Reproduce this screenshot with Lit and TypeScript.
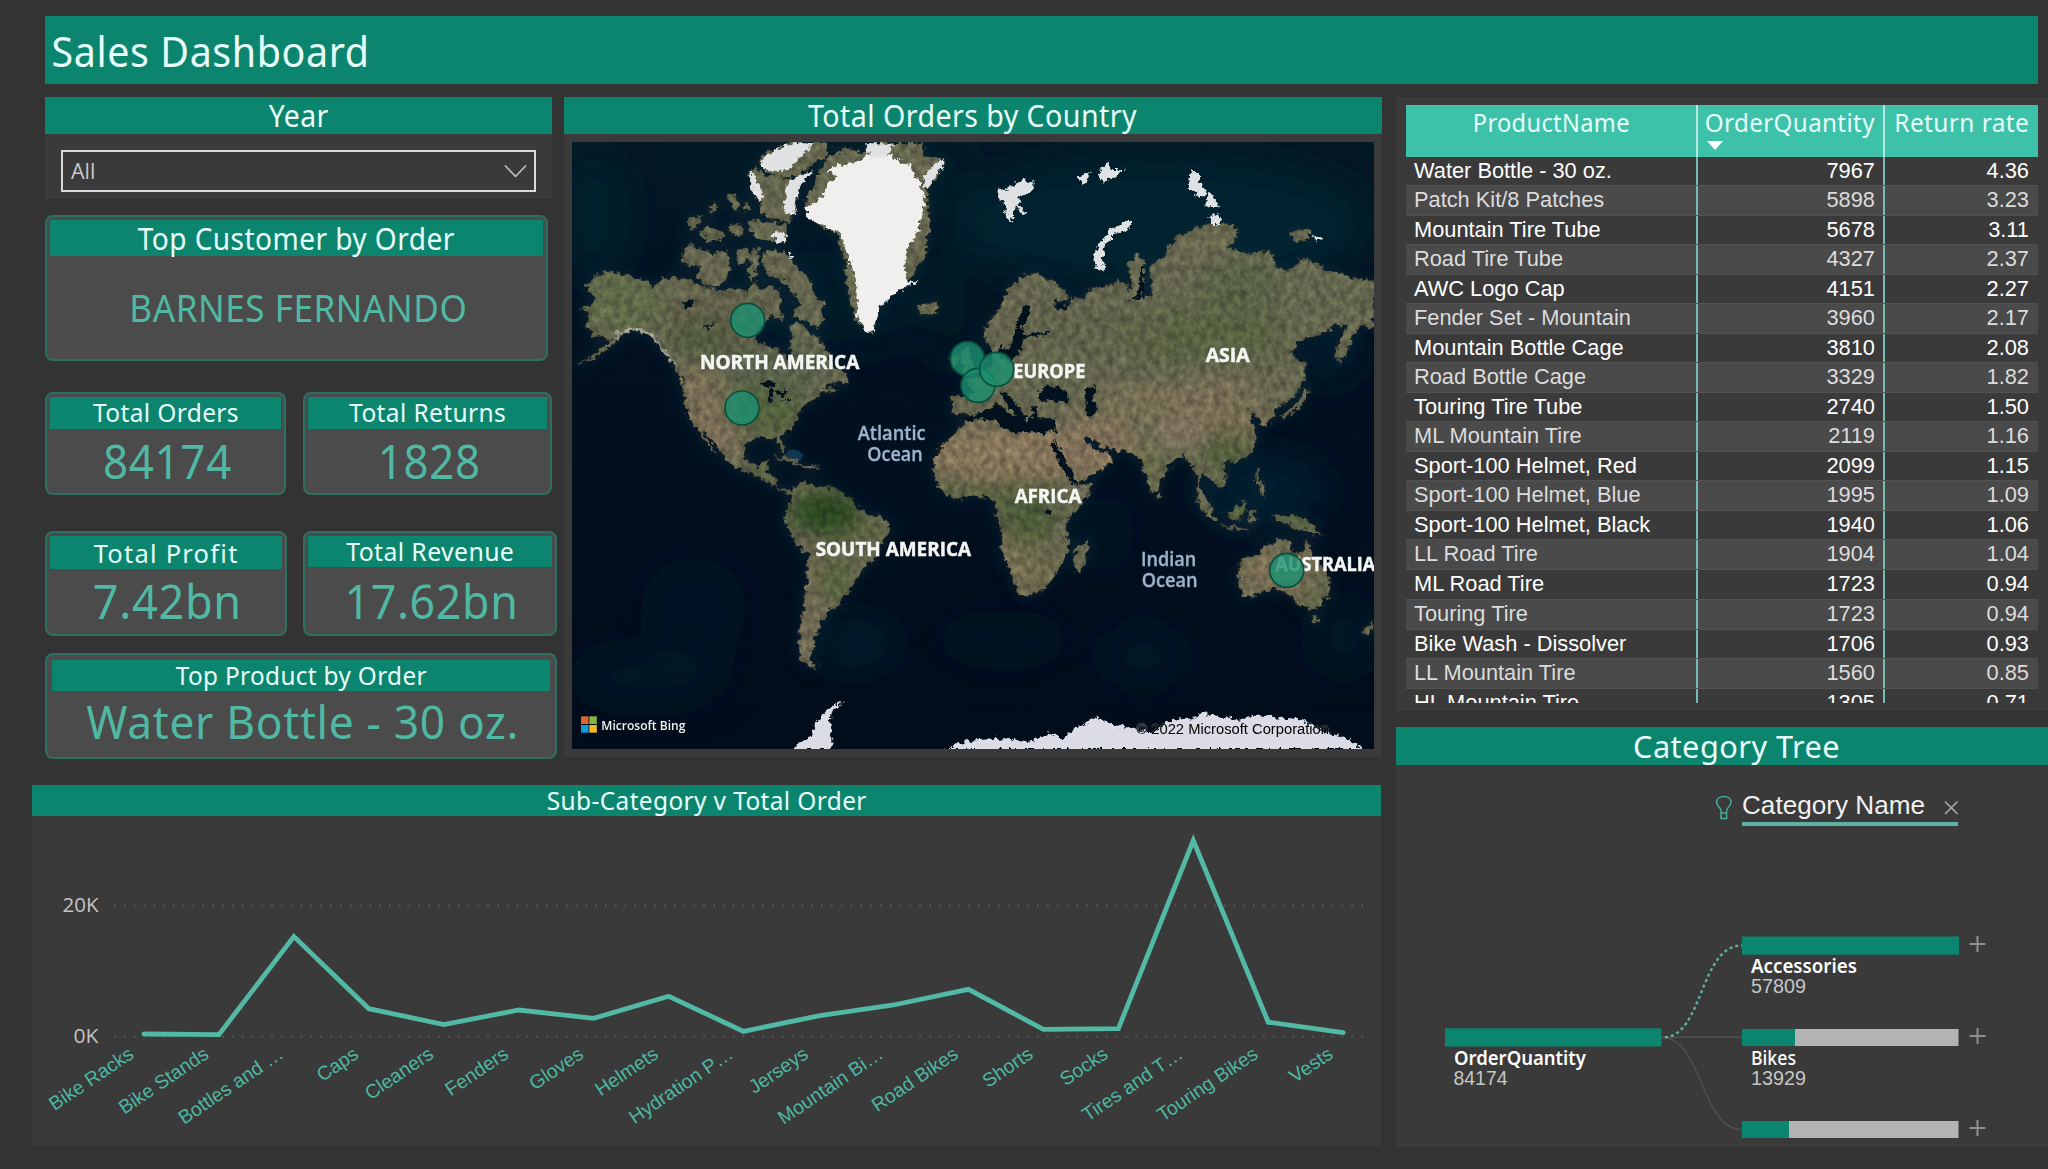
import { LitElement, html, svg, css } from "lit";
import { customElement, property } from "lit/decorators.js";

const HEAD_FONT = css`"Noto Sans", "Open Sans", sans-serif`;
const BODY_FONT = css`"Liberation Sans", Arial, sans-serif`;

/**
 * One line of text that takes up exactly `w` pixels: short lines are tracked
 * out, long lines are condensed.
 */
@customElement("fit-line")
class FitLine extends LitElement {
  @property({ type: Number }) w = 0;
  static styles = css`
    :host { display: inline-flex; justify-content: center; white-space: pre; vertical-align: top; }
    .ink { display: block; flex: none; letter-spacing: 0.015em; }
  `;
  firstUpdated() {
    const ink = this.renderRoot.querySelector<HTMLElement>(".ink")!;
    const count = (this.textContent ?? "").length;
    const natural = ink.getBoundingClientRect().width;
    this.style.width = `${this.w}px`;
    if (natural > this.w) {
      ink.style.transform = `scaleX(${(this.w / natural).toFixed(4)})`;
    } else {
      const size = parseFloat(getComputedStyle(ink).fontSize);
      const spacing = size * 0.015 + (this.w - natural) / count;
      ink.style.letterSpacing = `${spacing.toFixed(3)}px`;
    }
  }
  render() {
    return html`<span class="ink"><slot></slot></span>`;
  }
}

/* ---------------------------------------------------------------- map */

const NORTH_AMERICA =
  "M75 590L100 560L140 540L170 552L200 550L235 568L270 575L285 590L310 565L350 558L390 570L430 588L480 602L520 592L560 602L582 572L600 600L625 585L645 592L662 612L668 640L650 665L672 678L665 695L630 680L612 700L590 730L585 752L622 768L660 780L680 812L698 800L690 760L694 705L712 696L735 708L752 735L775 742L800 775L806 800L830 835L865 850L858 885L832 872L800 885L790 892L835 895L820 905L782 912L760 930L730 950L712 975L708 1000L675 1030L662 1045L680 1075L676 1092L660 1080L650 1048L600 1042L562 1056L552 1095L570 1122L598 1130L612 1108L630 1108L620 1146L650 1162L652 1190L690 1200L700 1205L690 1215L652 1195L620 1172L590 1158L540 1140L502 1118L478 1078L450 1040L425 1020L470 1092L458 1085L420 1030L390 988L370 920L365 870L335 820L300 770L275 738L245 728L215 722L185 735L160 765L120 795L60 820L40 826L110 785L150 752L130 740L100 742L75 700L92 672L62 655L100 640L105 620Z";
const SOUTH_AMERICA =
  "M690 1205L715 1182L740 1175L765 1188L800 1188L838 1202L870 1222L895 1255L930 1275L965 1280L993 1300L985 1335L960 1365L950 1405L915 1432L900 1455L880 1478L865 1508L840 1525L838 1545L815 1558L800 1568L798 1588L775 1600L778 1625L760 1645L768 1662L755 1685L750 1710L775 1725L760 1735L732 1720L718 1695L716 1640L724 1580L732 1530L740 1470L745 1395L712 1368L690 1330L670 1290L678 1258L692 1235Z";
const EURASIA =
  "M1275 720L1282 698L1320 655L1338 605L1378 562L1430 545L1475 575L1515 598L1525 622L1500 640L1480 650L1515 655L1535 620L1560 625L1590 598L1640 588L1665 570L1700 580L1710 610L1708 560L1705 520L1728 490L1752 505L1756 580L1745 625L1775 615L1770 555L1770 525L1810 505L1820 480L1848 442L1900 418L1940 402L2010 400L2032 415L2030 445L2000 475L2080 490L2100 480L2135 488L2148 530L2180 540L2212 525L2220 505L2280 520L2290 545L2340 545L2370 562L2442 572L2442 720L2405 705L2380 735L2362 790L2340 822L2325 795L2340 745L2362 705L2330 708L2270 738L2220 752L2190 790L2228 815L2230 870L2205 925L2150 955L2130 1000L2105 1010L2090 975L2070 960L2078 1000L2092 1035L2080 1075L2060 1100L2025 1118L1990 1115L2002 1160L1995 1180L1975 1198L1955 1170L1930 1150L1920 1190L1950 1238L1968 1290L1935 1260L1912 1220L1910 1170L1895 1125L1870 1100L1845 1108L1818 1145L1795 1190L1785 1215L1768 1195L1742 1115L1710 1085L1650 1078L1620 1068L1590 1045L1572 1035L1585 1065L1612 1082L1650 1088L1652 1115L1620 1145L1580 1165L1545 1185L1598 1180L1590 1210L1555 1255L1515 1300L1530 1365L1510 1415L1475 1465L1445 1505L1400 1520L1378 1515L1350 1445L1322 1380L1328 1325L1305 1280L1308 1240L1280 1220L1230 1220L1180 1228L1140 1195L1120 1150L1125 1100L1150 1060L1185 1030L1205 1000L1240 975L1175 972L1172 920L1225 918L1240 905L1215 870L1260 855L1280 835L1300 820L1288 785L1300 770L1275 755Z";
const INLAND_WATER = [
  "M1205 985L1240 978L1262 965L1300 950L1312 935L1340 965L1370 985L1340 940L1320 905L1345 915L1395 970L1400 1000L1420 968L1412 950L1430 948L1440 985L1485 985L1488 1025L1435 1030L1395 1022L1370 1032L1320 1010L1315 992L1260 985L1215 995Z",
  "M1475 1050L1490 1060L1545 1165L1548 1188L1530 1172L1500 1125L1478 1075Z",
  "M1435 910L1460 885L1480 895L1500 888L1528 925L1520 938L1470 930L1440 932Z",
  "M1570 900L1605 885L1610 905L1595 925L1612 960L1600 980L1575 975L1580 940Z",
  "M1372 690L1395 645L1412 650L1400 690L1385 715L1395 732L1465 725L1460 735L1400 742L1375 790L1345 815L1310 790L1322 770L1350 780L1362 740Z",
  "M1485 620L1495 640L1520 650L1512 665L1488 650Z",
  "M1458 1262L1472 1260L1474 1272L1462 1276Z",
  "M1745 525L1752 530L1750 600L1735 628L1700 632L1732 615Z",
  "M600 885L630 870L650 890L625 892Z",
  "M622 935L632 895L640 900L634 935Z",
  "M648 900L680 905L665 925Z",
  "M660 935L690 925L690 932Z",
  "M370 640L400 628L392 650L375 655Z",
  "M425 715L470 695L440 718Z",
];
const AUSTRALIA =
  "M2035 1420L2065 1400L2098 1390L2110 1368L2140 1360L2150 1345L2190 1352L2186 1375L2215 1395L2232 1378L2236 1338L2252 1368L2262 1402L2290 1430L2312 1468L2308 1505L2285 1548L2255 1556L2215 1545L2200 1520L2180 1510L2150 1498L2110 1502L2080 1518L2045 1522L2035 1480Z";
const SMALL_LANDS = [
  "M1540 1395L1555 1370L1582 1345L1588 1370L1575 1410L1560 1448L1545 1442Z",
  "M2255 1580L2280 1582L2272 1602L2260 1598Z",
  "M2405 1630L2415 1612L2442 1590L2442 1612L2420 1635Z",
  "M2140 1268L2170 1280L2200 1272L2240 1290L2270 1320L2300 1345L2260 1330L2230 1320L2200 1318L2180 1300L2150 1290Z",
  "M1998 1272L2020 1260L2050 1228L2062 1240L2050 1280L2030 1290L2010 1286Z",
  "M1905 1222L1930 1240L1965 1275L1972 1295L1955 1290L1925 1260Z",
  "M1970 1298L2010 1305L2070 1318L2068 1325L2000 1316Z",
  "M2065 1262L2100 1252L2080 1270L2095 1300L2080 1290L2072 1310L2066 1290Z",
  "M2085 1130L2098 1135L2095 1165L2115 1190L2110 1225L2098 1200L2085 1165Z",
  "M2230 890L2250 895L2240 925L2222 950L2190 975L2150 985L2180 960L2215 935Z",
  "M2228 805L2236 812L2234 880L2226 880Z",
  "M1170 800L1195 795L1192 825L1175 835Z",
  "M1200 780L1225 770L1235 810L1250 840L1210 850Z",
  "M640 1098L680 1100L720 1120L760 1128L790 1132L740 1138L700 1118L660 1108Z",
  "M1790 1205L1804 1215L1800 1230L1792 1225Z",
  "M375 470L400 462L425 480L460 485L500 480L510 510L505 560L470 595L430 585L408 560L420 530L390 530L360 520Z",
  "M525 480L560 470L575 500L550 530L525 510Z",
  "M575 470L600 475L600 500L585 560L570 580L565 540Z",
  "M612 485L650 478L680 490L700 520L735 550L755 580L760 610L795 640L785 665L795 690L770 715L735 690L695 680L720 640L690 600L665 570L620 550L606 520Z",
  "M625 650L650 640L668 670L645 680Z",
  "M380 395L400 375L425 380L420 405L392 420Z",
  "M412 425L440 410L495 425L485 450L440 455Z",
  "M500 410L530 395L555 415L545 440L510 430Z",
  "M560 395L600 390L680 405L675 460L620 455L590 440L565 420Z",
  "M445 350L465 335L470 355L450 372Z",
  "M500 318L520 310L540 345L535 365L510 345Z",
  "M550 340L570 335L572 360L552 362Z",
  "M565 250L590 230L620 260L680 260L700 300L715 330L690 400L640 390L600 370L600 330L575 300Z",
  "M595 210L630 180L690 160L805 160L800 200L740 235L720 260L650 265L610 240Z",
  "M805 200L850 175L910 185L960 160L1090 160L1100 200L1150 212L1130 260L1100 290L1110 400L1095 500L1050 570L960 640L935 732L885 690L862 600L850 500L830 430L770 400L730 340L770 260Z",
  "M1070 640L1100 645L1130 630L1140 655L1110 680L1080 672Z",
  "M2185 430L2210 415L2250 420L2245 450L2200 455Z",
];
const GREENLAND_ICE =
  "M925 195L960 175L1000 205L1045 225L1075 270L1092 320L1090 370L1082 400L1065 440L1042 480L1030 530L1042 575L1075 572L1010 605L985 630L955 655L940 725L915 725L892 680L888 570L866 500L838 425L790 412L745 385L728 350L775 335L800 290L830 262L800 235L880 220Z";
const SNOW = [
  "M600 215L640 180L700 160L760 162L720 200L690 235L650 245L610 240Z",
  "M690 270L760 240L720 290L700 380L670 360L680 300Z",
  "M568 240L590 262L610 310L600 340L575 300Z",
  "M640 430L675 425L680 455L650 460Z",
  "M1090 260L1140 208L1155 220L1120 270L1095 295Z",
  "M915 160L1000 160L985 200L930 200Z",
  "M680 485L705 500L700 510Z",
  "M1312 295L1340 300L1385 270L1425 280L1420 300L1385 318L1375 340L1400 370L1390 375L1365 345L1355 395L1342 390L1335 345L1318 325Z",
  "M1550 262L1590 245L1580 275L1565 280Z",
  "M1615 250L1640 220L1660 240L1695 240L1660 265L1620 275Z",
  "M1885 265L1900 240L1920 250L1920 280L1940 310L1925 325L1890 300Z",
  "M1940 325L1955 312L1975 345L1940 350Z",
  "M1945 385L1965 368L1985 385L1975 402L1950 402Z",
  "M2258 435L2290 445L2280 455L2262 448Z",
  "M1605 520L1602 500L1620 460L1650 420L1700 392L1718 395L1712 412L1670 430L1642 455L1628 495L1632 540L1620 545Z",
];
const ANTARCTICA = [
  "M700 1977L720 1955L755 1940L762 1900L790 1875L820 1845L850 1835L815 1865L812 1900L815 1977Z",
  "M1160 1977L1195 1962L1230 1952L1330 1945L1400 1956L1470 1930L1508 1950L1540 1915L1580 1898L1612 1880L1660 1905L1720 1915L1770 1930L1830 1890L1905 1885L1920 1865L1960 1875L2030 1890L2100 1875L2130 1880L2220 1888L2280 1920L2360 1945L2410 1977Z",
];
/* Soft colour regions over the land: cx, cy, rx, ry, fill, opacity. */
const TINTS: [number, number, number, number, string, number][] = [
  [180, 640, 140, 80, "#5c6a47", 0.8],
  [480, 690, 190, 80, "#605e48", 0.9],
  [420, 760, 90, 70, "#4c5a3b", 0.7],
  [640, 830, 200, 70, "#56604a", 0.8],
  [420, 930, 90, 110, "#796e55", 0.9],
  [470, 1050, 70, 80, "#7b6e56", 0.9],
  [620, 960, 120, 70, "#515f3c", 0.9],
  [600, 1150, 60, 30, "#4b5a38", 0.8],
  [800, 1270, 110, 70, "#2c4820", 1],
  [920, 1330, 60, 60, "#5c6241", 0.8],
  [755, 1470, 30, 110, "#786a54", 1],
  [820, 1470, 60, 70, "#52603c", 0.8],
  [750, 1640, 30, 100, "#766a54", 0.9],
  [1330, 1090, 240, 85, "#86745a", 1],
  [1600, 1080, 130, 100, "#83725a", 1],
  [1330, 1215, 220, 40, "#515c3b", 0.8],
  [1400, 1290, 90, 70, "#465836", 0.8],
  [1420, 1440, 90, 80, "#706a4e", 0.8],
  [1340, 1420, 30, 90, "#85765a", 0.8],
  [1790, 940, 170, 50, "#7c7156", 0.9],
  [2000, 1000, 150, 60, "#7b6e54", 0.8],
  [1860, 1030, 90, 35, "#887965", 0.8],
  [1990, 900, 110, 40, "#7d6f58", 0.8],
  [1780, 1110, 50, 60, "#656a48", 0.9],
  [2000, 1080, 80, 50, "#4c5c37", 0.9],
  [1930, 740, 260, 90, "#515f3b", 0.6],
  [2040, 590, 120, 80, "#4a5e3b", 0.5],
  [1600, 720, 200, 80, "#5f6349", 0.7],
  [1940, 450, 90, 40, "#6e6c50", 0.8],
  [2320, 620, 130, 60, "#62664b", 0.7],
  [2160, 1450, 120, 70, "#7f7055", 0.9],
  [2270, 1500, 50, 60, "#646848", 0.7],
  [2210, 1295, 60, 20, "#3f562e", 0.9],
  [2030, 1260, 50, 30, "#3f562e", 0.9],
];
/* Broad lighter areas of the sea floor: cx, cy, rx, ry, fill, opacity. */
const SEABED: [number, number, number, number, string, number][] = [
  [1800, 400, 640, 200, "#052632", 0.9],
  [100, 380, 110, 200, "#062633", 0.6],
  [800, 620, 330, 180, "#051e2b", 0.6],
  [1180, 620, 80, 240, "#031a2a", 0.6],
  [1140, 250, 90, 130, "#041f2c", 0.6],
  [2110, 1200, 200, 110, "#072536", 0.7],
  [2300, 800, 100, 80, "#0a2a38", 0.6],
  [880, 1660, 130, 60, "#082739", 0.7],
  [400, 1560, 160, 160, "#031a2b", 0.5],
  [260, 1760, 240, 80, "#031a2c", 0.6],
  [1750, 1700, 120, 90, "#041f31", 0.5],
  [1330, 1650, 200, 90, "#031a2a", 0.4],
  [2350, 1640, 90, 120, "#062233", 0.5],
  [1620, 1330, 60, 110, "#05202f", 0.5],
];
/* Map captions: x, baseline, width, text. */
const CONTINENTS: [number, number, number, string][] = [
  [420, 836, 478, "NORTH AMERICA"],
  [767, 1397, 466, "SOUTH AMERICA"],
  [1360, 865, 216, "EUROPE"],
  [1937, 816, 132, "ASIA"],
  [1364, 1240, 200, "AFRICA"],
  [2146, 1442, 300, "AUSTRALIA"],
];
const OCEANS: [number, number, number, string][] = [
  [893, 1050, 204, "Atlantic"],
  [922, 1114, 166, "Ocean"],
  [1743, 1429, 166, "Indian"],
  [1745, 1492, 168, "Ocean"],
];
const BUBBLES: [number, number][] = [
  [563, 691], [546, 954], [1222, 806], [1254, 886], [1310, 838], [2180, 1441],
];

@customElement("orders-map")
class OrdersMap extends LitElement {
  static styles = css`
    :host { display: block; }
    .map { display: block; width: 802px; height: 607px; }
    .continent { font: 700 60px "Open Sans", sans-serif; fill: #f4f6f4; stroke: #f4f6f4; stroke-width: 1.5; }
    .ocean { font: 600 58px "Open Sans", sans-serif; fill: #9db3cb; stroke: #9db3cb; stroke-width: 1; }
    .brand { font: 600 38px "Open Sans", sans-serif; fill: #f2f2f2; }
    .credit { font: 42px ${BODY_FONT}; fill: #000; stroke: #dcdce6; stroke-opacity: 0.4; stroke-width: 3; paint-order: stroke; }
    .bubble { fill: #1b9070; fill-opacity: 0.8; stroke: #07503e; stroke-width: 5; }
  `;
  render() {
    const land = [NORTH_AMERICA, SOUTH_AMERICA, EURASIA, AUSTRALIA, ...SMALL_LANDS].join("");
    return html`<svg class="map" viewBox="36 156 2406 1821">
      <defs>
        <linearGradient id="sea" x1="0" y1="0" x2="0" y2="1">
          <stop offset="0" stop-color="#031926"></stop>
          <stop offset="0.35" stop-color="#021020"></stop>
          <stop offset="1" stop-color="#010d1b"></stop>
        </linearGradient>
        <filter id="soft" x="-50%" y="-50%" width="200%" height="200%"><feGaussianBlur stdDeviation="28"></feGaussianBlur></filter>
        <filter id="deep" filterUnits="userSpaceOnUse" x="-200" y="-100" width="2900" height="2300"><feGaussianBlur stdDeviation="60"></feGaussianBlur></filter>
        <filter id="shelf" filterUnits="userSpaceOnUse" x="-50" y="50" width="2600" height="2000"><feGaussianBlur stdDeviation="20"></feGaussianBlur></filter>
        <filter id="terrain" filterUnits="userSpaceOnUse" x="0" y="120" width="2480" height="1900" color-interpolation-filters="sRGB">
          <feTurbulence type="fractalNoise" baseFrequency="0.06" numOctaves="3" seed="8" result="warp"></feTurbulence>
          <feDisplacementMap in="SourceGraphic" in2="warp" scale="30" xChannelSelector="R" yChannelSelector="G" result="coast"></feDisplacementMap>
          <feTurbulence type="fractalNoise" baseFrequency="0.05 0.04" numOctaves="4" seed="21" result="relief"></feTurbulence>
          <feColorMatrix in="relief" type="matrix" values="0.9 0 0 0 0.02  0.9 0 0 0 0.02  0.85 0 0 0 0.05  0 0 0 0 1" result="grey"></feColorMatrix>
          <feComposite in="coast" in2="grey" operator="arithmetic" k1="0.75" k2="0.64" k3="0" k4="0" result="lit"></feComposite>
          <feComposite in="lit" in2="coast" operator="in" result="cut"></feComposite>
          <feGaussianBlur in="cut" stdDeviation="1.8"></feGaussianBlur>
        </filter>
        <filter id="ice" filterUnits="userSpaceOnUse" x="0" y="120" width="2480" height="1900" color-interpolation-filters="sRGB">
          <feTurbulence type="fractalNoise" baseFrequency="0.07" numOctaves="3" seed="4" result="warp"></feTurbulence>
          <feDisplacementMap in="SourceGraphic" in2="warp" scale="26" xChannelSelector="R" yChannelSelector="G"></feDisplacementMap>
          <feGaussianBlur stdDeviation="2.2"></feGaussianBlur>
        </filter>
        <clipPath id="coastline"><path d=${land}></path></clipPath>
      </defs>
      <rect x="36" y="156" width="2406" height="1821" fill="url(#sea)"></rect>
      <g filter="url(#deep)">
        ${SEABED.map(([cx, cy, rx, ry, fill, o]) => svg`<ellipse cx=${cx} cy=${cy} rx=${rx} ry=${ry} fill=${fill} opacity=${o}></ellipse>`)}
      </g>
      <path d=${land} fill="#082b38" stroke="#082b38" stroke-width="24" opacity="0.5" filter="url(#shelf)"></path>
      <ellipse cx="700" cy="1095" rx="30" ry="16" fill="#1d5a7c" opacity="0.5" filter="url(#ice)"></ellipse>
      <g filter="url(#terrain)">
        <g clip-path="url(#coastline)">
          <rect x="0" y="120" width="2480" height="1900" fill="#66674f"></rect>
          <g filter="url(#soft)">
            ${TINTS.map(([cx, cy, rx, ry, fill, o]) => svg`<ellipse cx=${cx} cy=${cy} rx=${rx} ry=${ry} fill=${fill} opacity=${o}></ellipse>`)}
          </g>
          <path d="M160 745Q235 690 285 745L345 830" fill="none" stroke="#b9b8ae" stroke-width="9" opacity="0.8"></path>
        </g>
      </g>
      <g fill="#02111e" filter="url(#ice)">
        ${INLAND_WATER.map((d) => svg`<path d=${d}></path>`)}
      </g>
      <g filter="url(#ice)">
        <path d=${GREENLAND_ICE} fill="#f1efee"></path>
        ${SNOW.map((d) => svg`<path d=${d} fill="#dfe1e2"></path>`)}
        ${ANTARCTICA.map((d) => svg`<path d=${d} fill="#dcdce6"></path>`)}
      </g>
      ${OCEANS.map(([x, y, w, t]) => svg`<text class="ocean" x=${x} y=${y} textLength=${w} lengthAdjust="spacingAndGlyphs">${t}</text>`)}
      ${CONTINENTS.map(([x, y, w, t]) => svg`<text class="continent" x=${x} y=${y} textLength=${w} lengthAdjust="spacingAndGlyphs">${t}</text>`)}
      ${BUBBLES.map(([x, y]) => svg`<circle class="bubble" cx=${x} cy=${y} r="51"></circle>`)}
      <rect x="63" y="1879" width="22.5" height="23" fill="#e0662f"></rect>
      <rect x="88" y="1879" width="22.5" height="23" fill="#84b53c"></rect>
      <rect x="63" y="1905" width="22.5" height="23" fill="#159bd7"></rect>
      <rect x="88" y="1905" width="22.5" height="23" fill="#f4b81c"></rect>
      <text class="brand" x="124" y="1919" textLength="252" lengthAdjust="spacingAndGlyphs">Microsoft Bing</text>
      <text class="credit" x="1729" y="1931" textLength="578" lengthAdjust="spacingAndGlyphs">© 2022 Microsoft Corporation</text>
    </svg>`;
  }
}

/* -------------------------------------------------------------- chart */

const SERIES: [string, number][] = [
  ["Bike Racks", 1034], ["Bike Stands", 1034.6], ["Bottles and …", 936.5], ["Caps", 1008.7],
  ["Cleaners", 1024.6], ["Fenders", 1010], ["Gloves", 1018.3], ["Helmets", 996.3],
  ["Hydration P…", 1031.4], ["Jerseys", 1015.8], ["Mountain Bi…", 1005], ["Road Bikes", 989.3],
  ["Shorts", 1029.4], ["Socks", 1028.7], ["Tires and T…", 840.5], ["Touring Bikes", 1022.2],
  ["Vests", 1032.7],
];

@customElement("order-chart")
class OrderChart extends LitElement {
  static styles = css`
    :host { display: block; }
    .chart { display: block; }
    .axis { font: 20.5px "Open Sans", sans-serif; fill: #c4c4c4; }
    .name { font: 19.4px ${BODY_FONT}; fill: #4db8a2; text-anchor: end; }
    .grid { stroke: #5c5c5c; stroke-width: 1.8; stroke-dasharray: 1.8 8.02; }
    .line { fill: none; stroke: #52b9a4; stroke-width: 4.8; stroke-linecap: round; }
  `;
  render() {
    const xs = SERIES.map((_, i) => 144 + i * 74.95);
    const points = SERIES.map(([, y], i) => `${xs[i]},${y}`).join(" ");
    return html`<svg class="chart" width="1349" height="330" viewBox="32 816 1349 330">
      <line class="grid" x1="114" x2="1366" y1="905.5" y2="905.5"></line>
      <line class="grid" x1="114" x2="1366" y1="1036.7" y2="1036.7"></line>
      <text class="axis" x="62.5" y="912" textLength="36" lengthAdjust="spacingAndGlyphs">20K</text>
      <text class="axis" x="73.5" y="1043" textLength="25" lengthAdjust="spacingAndGlyphs">0K</text>
      <polyline class="line" points=${points}></polyline>
      ${SERIES.map(([name], i) => svg`<text class="name" transform="translate(${xs[i] - 9} 1057) rotate(-34)">${name}</text>`)}
    </svg>`;
  }
}

/* --------------------------------------------------------------- tree */

@customElement("category-tree")
class CategoryTree extends LitElement {
  static styles = css`
    :host { display: block; }
    .tree { display: block; }
    .level { font: 26.5px ${BODY_FONT}; fill: #f0f0f0; }
    .node { font: 600 19px ${HEAD_FONT}; fill: #fff; }
    .plain { font-weight: 500; }
    .count { font: 20px ${BODY_FONT}; fill: #c6c6c6; }
    .rest { fill: #b3b3b3; }
    .bar { fill: #0c856e; }
    .icon { fill: none; stroke: #8f8f8f; stroke-width: 2; }
    .close { stroke: #a5a5a5; stroke-width: 1.7; }
    .bulb { fill: none; stroke: #45ad98; stroke-width: 1.5; }
    .link { fill: none; stroke: #505050; stroke-width: 1.4; }
    .dotted { stroke: #5ab3a2; stroke-width: 2.4; stroke-dasharray: 3 3; }
  `;
  render() {
    return html`<svg class="tree" width="652" height="382" viewBox="1396 765 652 382">
      <path class="bulb" d="M1721 813V810.5C1720.5 807.5 1716.6 805.8 1716.6 802.2C1716.6 798.8 1719.5 796.4 1723.8 796.4C1728 796.4 1731 798.8 1731 802.2C1731 805.8 1727 807.5 1726.6 810.5V813Z M1721 813V818.6H1726.6V813"></path>
      <text class="level" x="1742" y="814" textLength="183" lengthAdjust="spacingAndGlyphs">Category Name</text>
      <path class="icon close" d="M1945 801.5L1957.5 814M1957.5 801.5L1945 814"></path>
      <rect x="1742" y="822" width="216" height="4" fill="#5cb3a4"></rect>
      <path class="link" d="M1661.5 1037.3H1742"></path>
      <path class="link" d="M1661.5 1037.3C1703 1037.3 1700 1129.5 1742 1129.5"></path>
      <path class="link dotted" d="M1665 1037.3C1703 1035 1700 945.5 1742 945.5"></path>
      <rect class="bar" x="1445" y="1028.3" width="216.5" height="18.2"></rect>
      <text class="node" x="1454" y="1065" textLength="132" lengthAdjust="spacingAndGlyphs">OrderQuantity</text>
      <text class="count" x="1453.5" y="1084.5" textLength="54" lengthAdjust="spacingAndGlyphs">84174</text>
      <rect class="bar" x="1742" y="936.5" width="217" height="18.2"></rect>
      <text class="node" x="1751" y="973" textLength="106" lengthAdjust="spacingAndGlyphs">Accessories</text>
      <text class="count" x="1751" y="992.5" textLength="55" lengthAdjust="spacingAndGlyphs">57809</text>
      <rect class="rest" x="1742" y="1029" width="216.5" height="17"></rect>
      <rect class="bar" x="1742" y="1029" width="53" height="17"></rect>
      <text class="node plain" x="1751" y="1065" textLength="45" lengthAdjust="spacingAndGlyphs">Bikes</text>
      <text class="count" x="1751" y="1084.5" textLength="55" lengthAdjust="spacingAndGlyphs">13929</text>
      <rect class="rest" x="1742" y="1121" width="216.5" height="17"></rect>
      <rect class="bar" x="1742" y="1121" width="47" height="17"></rect>
      ${[944, 1036, 1128].map((y) => svg`<path class="icon" d="M1969.5 ${y}H1985.5M1977.5 ${y - 8}V${y + 8}"></path>`)}
    </svg>`;
  }
}

/* -------------------------------------------------------------- table */

const PRODUCTS: [string, string, string][] = [
  ["Water Bottle - 30 oz.", "7967", "4.36"],
  ["Patch Kit/8 Patches", "5898", "3.23"],
  ["Mountain Tire Tube", "5678", "3.11"],
  ["Road Tire Tube", "4327", "2.37"],
  ["AWC Logo Cap", "4151", "2.27"],
  ["Fender Set - Mountain", "3960", "2.17"],
  ["Mountain Bottle Cage", "3810", "2.08"],
  ["Road Bottle Cage", "3329", "1.82"],
  ["Touring Tire Tube", "2740", "1.50"],
  ["ML Mountain Tire", "2119", "1.16"],
  ["Sport-100 Helmet, Red", "2099", "1.15"],
  ["Sport-100 Helmet, Blue", "1995", "1.09"],
  ["Sport-100 Helmet, Black", "1940", "1.06"],
  ["LL Road Tire", "1904", "1.04"],
  ["ML Road Tire", "1723", "0.94"],
  ["Touring Tire", "1723", "0.94"],
  ["Bike Wash - Dissolver", "1706", "0.93"],
  ["LL Mountain Tire", "1560", "0.85"],
  ["HL Mountain Tire", "1305", "0.71"],
];

@customElement("product-table")
class ProductTable extends LitElement {
  static styles = css`
    :host { display: block; height: 598px; overflow: hidden; font: 21.8px ${BODY_FONT}; color: #fff; }
    .row { display: grid; grid-template-columns: 292px 187px 153px; height: 28.13px; line-height: 27px; }
    .row.alt { background: #4a4a4a; color: #dcdcdc; height: 29px; line-height: 28.4px; border: solid #515151; border-width: 1px 0; }
    .cell { padding: 0 8px 0 8px; text-align: right; white-space: nowrap; border-right: 2px solid #76bcb0; box-sizing: border-box; }
    .cell:first-child { text-align: left; }
    .cell:last-child { border-right: 0; padding-right: 9px; }
    .head { height: 51.5px; background: #3dc1a9; color: #e6fffb; font: 25px ${HEAD_FONT}; line-height: 35px; }
    .head .cell { border-color: #b4e8de; }
    .head .cell:first-child { text-align: center; }
    .sorted { display: flex; flex-direction: column; align-items: flex-end; }
    .arrow { align-self: flex-start; margin: 1px 0 0 1px; border: 8.5px solid transparent; border-top: 9.5px solid #fff; border-bottom: 0; }
  `;
  render() {
    return html`
      <div class="row head">
        <div class="cell"><fit-line w="157">ProductName</fit-line></div>
        <div class="cell sorted"><fit-line w="170">OrderQuantity</fit-line><span class="arrow"></span></div>
        <div class="cell"><fit-line w="135">Return rate</fit-line></div>
      </div>
      ${PRODUCTS.map((cells, i) => html`<div class="row ${i % 2 ? "alt" : ""}">
        ${cells.map((c) => html`<div class="cell">${c}</div>`)}
      </div>`)}
    `;
  }
}

/* --------------------------------------------------------------- page */

@customElement("app-root")
class AppRoot extends LitElement {
  static styles = css`
    :host { display: flex; flex-direction: column; box-sizing: border-box; width: 2048px; height: 1169px; padding-top: 16px; overflow: hidden; background: #333; font-family: ${HEAD_FONT}; color: #e8fffb; }
    .bar { background: #0c856e; text-align: center; white-space: nowrap; }
    .title { height: 67.5px; margin: 0 10px 0 45px; padding-left: 7px; line-height: 69px; font-size: 42.5px; text-align: left; }
    .main { display: flex; gap: 14px; padding: 13.5px 0 0 32px; }
    .wide { width: 1350px; display: flex; flex-direction: column; }
    .upper { display: flex; gap: 7px; height: 688px; padding-left: 13px; }
    .side { width: 512px; display: flex; flex-direction: column; }
    .panel { background: #3a3a3a; }
    .h30 { height: 36.5px; line-height: 38px; font-size: 30px; }
    .year { width: 507px; height: 102px; }
    .select { box-sizing: border-box; width: 475px; height: 42px; margin: 16px 0 0 16px; padding: 0 7px 0 8px; display: flex; align-items: center; justify-content: space-between; border: 2px solid #dadada; font: 21.5px "Open Sans", sans-serif; color: #c9c9c9; }
    .chevron { fill: none; stroke: #c9c9c9; stroke-width: 1.5; }
    .card { box-sizing: border-box; display: flex; flex-direction: column; background: #4b4b4b; border: 2px solid #2f6f61; border-radius: 8px; padding: 3px; color: #50b8a3; }
    .card .bar { color: #e8fffb; }
    .value { flex: 1; display: flex; align-items: center; justify-content: center; line-height: 1; white-space: nowrap; }
    .value fit-line { margin-left: 3px; }
    .customer { width: 503px; height: 146px; margin-top: 16px; }
    .customer .bar { height: 36px; line-height: 38px; font-size: 30px; }
    .customer .value { font-size: 38.5px; padding-top: 2px; }
    .pair { display: flex; gap: 16px; }
    .kpis { margin-top: 31px; }
    .kpis .card { height: 103px; }
    .totals { margin-top: 35.5px; }
    .totals .card { height: 105.5px; }
    .pair .bar { height: 31.5px; line-height: 31px; font-size: 25.5px; }
    .pair .value { font-size: 48px; padding-top: 3px; }
    .orders { width: 241px; }
    .returns { width: 249px; margin-left: 1px; }
    .profit { width: 242.5px; }
    .profit .bar { height: 33px; line-height: 34px; }
    .revenue { width: 254px; }
    .product { width: 512px; height: 105.5px; margin-top: 17px; padding: 5px; }
    .product .bar { height: 31px; line-height: 31px; font-size: 26px; }
    .product .value { font-size: 45px; padding-bottom: 0; }
    .map-panel { width: 818px; height: 660px; }
    .map-body { padding: 8px; }
    .chart-panel { width: 1349px; height: 361px; }
    .chart-panel .bar { height: 31px; line-height: 30px; font-size: 25.5px; }
    .right { width: 652px; display: flex; flex-direction: column; gap: 16px; }
    .table-panel { box-sizing: border-box; height: 614px; padding: 8px 10px; }
    .tree-panel { height: 420px; }
    .tree-panel .bar { height: 38px; line-height: 38px; font-size: 31px; padding-left: 29px; }
  `;
  render() {
    return html`
      <div class="bar title"><fit-line w="318">Sales Dashboard</fit-line></div>
      <div class="main">
        <div class="wide">
          <div class="upper">
            <div class="side">
              <div class="panel year">
                <div class="bar h30"><fit-line w="60">Year</fit-line></div>
                <div class="select">
                  <span>All</span>
                  <svg class="chevron" width="23" height="14" viewBox="0 0 23 14"><path d="M1 1.5L11.5 12.5L22 1.5"></path></svg>
                </div>
              </div>
              <div class="card customer">
                <div class="bar"><fit-line w="317">Top Customer by Order</fit-line></div>
                <div class="value"><fit-line w="338">BARNES FERNANDO</fit-line></div>
              </div>
              <div class="pair kpis">
                <div class="card orders">
                  <div class="bar"><fit-line w="146">Total Orders</fit-line></div>
                  <div class="value"><fit-line w="129">84174</fit-line></div>
                </div>
                <div class="card returns">
                  <div class="bar"><fit-line w="157">Total Returns</fit-line></div>
                  <div class="value"><fit-line w="103">1828</fit-line></div>
                </div>
              </div>
              <div class="pair totals">
                <div class="card profit">
                  <div class="bar"><fit-line w="145">Total Profit</fit-line></div>
                  <div class="value"><fit-line w="149">7.42bn</fit-line></div>
                </div>
                <div class="card revenue">
                  <div class="bar"><fit-line w="168">Total Revenue</fit-line></div>
                  <div class="value"><fit-line w="174">17.62bn</fit-line></div>
                </div>
              </div>
              <div class="card product">
                <div class="bar"><fit-line w="251">Top Product by Order</fit-line></div>
                <div class="value"><fit-line w="433">Water Bottle - 30 oz.</fit-line></div>
              </div>
            </div>
            <div class="panel map-panel">
              <div class="bar h30"><fit-line w="329">Total Orders by Country</fit-line></div>
              <div class="map-body"><orders-map></orders-map></div>
            </div>
          </div>
          <div class="panel chart-panel">
            <div class="bar"><fit-line w="320">Sub-Category v Total Order</fit-line></div>
            <order-chart></order-chart>
          </div>
        </div>
        <div class="right">
          <div class="panel table-panel"><product-table></product-table></div>
          <div class="panel tree-panel">
            <div class="bar"><fit-line w="207">Category Tree</fit-line></div>
            <category-tree></category-tree>
          </div>
        </div>
      </div>
    `;
  }
}
